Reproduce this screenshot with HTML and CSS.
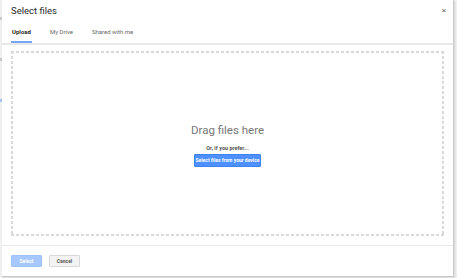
FILE: index.html
```html
<!DOCTYPE html>
<html>
<head>
	<meta charset="utf-8">
	<title>Select files</title>
	<link rel="stylesheet" href="styles.css">
</head>
<body>
	<div class="page">
		<div class="marks">
			<span class="mark"></span>
			<span class="mark"></span>
			<span class="mark blue"></span>
		</div>
		<div class="dialog">
			<header class="dialog-header">
				<div class="title-row">
					<h1 class="title">Select files</h1>
					<span class="close">&times;</span>
				</div>
				<nav class="tabs">
					<span class="tab active">Upload</span>
					<span class="tab">My Drive</span>
					<span class="tab">Shared with me</span>
				</nav>
			</header>

			<div class="dialog-body">
				<div class="dropzone">
					<div class="drag-title">Drag files here</div>
					<div class="prefer">Or, if you prefer...</div>
					<button class="btn-device">Select files from your device</button>
				</div>
			</div>

			<footer class="dialog-footer">
				<button class="btn btn-select">Select</button>
				<button class="btn btn-cancel">Cancel</button>
			</footer>
		</div>
	</div>
</body>
</html>
```

FILE: styles.css
```css
* {
	margin: 0;
	padding: 0;
	box-sizing: border-box;
	font-family: Roboto, "Liberation Sans", sans-serif;
}

body {
	background-color: #f0f0f0;
}

.page {
	display: flex;
	height: 278px;
}

.marks {
	width: 2px;
	display: flex;
	flex-direction: column;
	padding-top: 17px;
	gap: 38px;
}

.mark {
	display: block;
	width: 2px;
	height: 3px;
	background: #c9c9c9;
}

.mark.blue {
	background: #a9c4ec;
}

.dialog {
	width: 452px;
	height: 277px;
	background: white;
	border-right: 1px solid #c9c9c9;
	border-bottom: 1px solid #c9c9c9;
	box-shadow: 1px 1px 2px rgba(0, 0, 0, 0.12);
	display: flex;
	flex-direction: column;
}

.dialog-header {
	padding: 0 9px;
	border-bottom: 2px solid #e8e8e8;
}

.title-row {
	display: flex;
	justify-content: space-between;
	align-items: center;
	height: 20px;
	padding-top: 1px;
}

.title {
	font-size: 9.5px;
	font-weight: normal;
	color: #2a2a2a;
}

.close {
	font-size: 8px;
	color: #666;
	margin-right: -2px;
}

.tabs {
	display: flex;
	gap: 17px;
	margin-top: 3px;
}

.tab {
	font-size: 6px;
	color: #6a6a6a;
	padding: 5px 1px 6px 1px;
	border-bottom: 2px solid transparent;
}

.tab.active {
	color: #2a2a2a;
	font-weight: bold;
	border-bottom-color: #74a7f7;
}

.dialog-body {
	flex: 1;
	padding: 6px 9px 9px 9px;
	border-bottom: 1px solid #ebebeb;
}

/* dashed outline drawn as gradients to get short 3px dashes */
.dropzone {
	height: 100%;
	background:
		repeating-linear-gradient(90deg, #d9d9d9 0 3px, transparent 3px 5px) top left / 100% 2px no-repeat,
		repeating-linear-gradient(90deg, #d9d9d9 0 3px, transparent 3px 5px) bottom left / 100% 2px no-repeat,
		repeating-linear-gradient(180deg, #d9d9d9 0 3px, transparent 3px 5px) top left / 2px 100% no-repeat,
		repeating-linear-gradient(180deg, #d9d9d9 0 3px, transparent 3px 5px) top right / 2px 100% no-repeat;
	display: flex;
	flex-direction: column;
	align-items: center;
	justify-content: center;
	padding-top: 2px;
}

.drag-title {
	font-size: 11.5px;
	color: #777;
	line-height: 14px;
}

.prefer {
	font-size: 5.5px;
	font-weight: bold;
	color: #555;
	margin-top: 8px;
}

.btn-device {
	margin-top: 3px;
	height: 13px;
	width: 67px;
	background: #4d90fe;
	border: 1px solid #3d82f0;
	border-radius: 1px;
	color: white;
	font-size: 5px;
	font-weight: bold;
}

.dialog-footer {
	display: flex;
	gap: 7px;
	padding: 9px 9px 0 9px;
	height: 30px;
}

.btn {
	height: 12px;
	width: 31px;
	border-radius: 1px;
	font-size: 5px;
	font-weight: bold;
}

.btn-select {
	background: #a6c8ff;
	border: 1px solid #a0c2fb;
	color: white;
}

.btn-cancel {
	background: #f3f3f3;
	border: 1px solid #d8d8d8;
	color: #555;
}
```
